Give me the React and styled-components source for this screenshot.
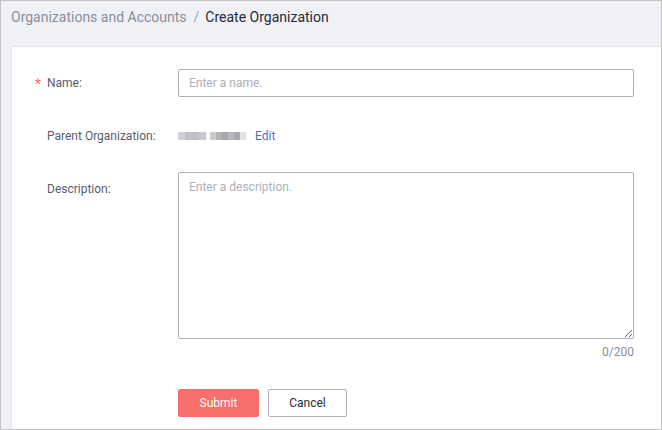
import styled, { createGlobalStyle } from "styled-components";

const GlobalStyle = createGlobalStyle`
  html, body {
    margin: 0;
    padding: 0;
    width: 662px;
    height: 430px;
    overflow: hidden;
    font-family: Roboto, "Liberation Sans", sans-serif;
  }
  * { box-sizing: border-box; }
`;

const Frame = styled.div`
  width: 662px;
  height: 430px;
  border: 1px solid #c4c4c4;
  background: #f0f1f6;
  display: flex;
  flex-direction: column;
`;

const Breadcrumb = styled.div`
  height: 45px;
  flex-shrink: 0;
  padding: 8px 0 0 10px;
  display: flex;
  align-items: flex-start;
  font-size: 14px;
  line-height: 16px;
`;

const Crumb = styled.span`
  color: ${(p) => (p.$current ? "#252b3a" : "#8a8e99")};
`;

const Slash = styled.span`
  color: #a0a3ab;
  margin: 0 6px 0 7px;
`;

const Card = styled.div`
  flex: 1;
  margin-left: 10px;
  background: #fff;
  border-top: 1px solid #e3e4e8;
  border-left: 1px solid #e8e9ec;
  padding: 22px 27px 0 22px;
  display: flex;
  flex-direction: column;
`;

const Row = styled.div`
  display: flex;
  align-items: ${(p) => (p.$top ? "flex-start" : "center")};
  margin-bottom: ${(p) => p.$gap || 0}px;
`;

const Label = styled.label`
  width: 144px;
  flex-shrink: 0;
  font-size: 12px;
  color: #575d6c;
  display: flex;
  align-items: center;
  padding-top: ${(p) => (p.$top ? "10px" : "0")};
`;

const Star = styled.span`
  color: #f66f6a;
  width: 13px;
  padding-left: 1px;
  font-size: 14px;
  line-height: 1;
  margin-top: 2px;
`;

const LabelText = styled.span`
  margin-left: 13px;
`;

const Input = styled.input`
  flex: 1;
  height: 28px;
  border: 1px solid #adb0b8;
  border-radius: 2px;
  padding: 0 10px;
  font-family: inherit;
  font-size: 12px;
  color: #252b3a;
  outline: none;
  &::placeholder { color: #adb0b8; }
`;

const Field = styled.div`
  flex: 1;
  display: flex;
  flex-direction: column;
`;

const TextArea = styled.textarea`
  height: 167px;
  border: 1px solid #adb0b8;
  border-radius: 2px;
  padding: 7px 10px;
  font-family: inherit;
  font-size: 12px;
  color: #252b3a;
  resize: vertical;
  outline: none;
  &::placeholder { color: #adb0b8; }
`;

const Counter = styled.div`
  text-align: right;
  font-size: 12px;
  color: #8a8e99;
  margin-top: 6px;
`;

const Blurred = styled.span`
  display: inline-flex;
  gap: 4px;
  margin-right: 9px;
`;

const Mosaic = styled.span`
  display: inline-flex;
  height: 8px;
  span {
    width: ${(p) => p.$cell}px;
    height: 8px;
  }
`;

const EditLink = styled.a`
  color: #526ecc;
  font-size: 12px;
  cursor: pointer;
`;

const Value = styled.div`
  display: flex;
  align-items: center;
`;

const Button = styled.button`
  height: 28px;
  padding: 0 16px;
  border-radius: 2px;
  font-family: inherit;
  font-size: 12px;
  cursor: pointer;
  border: 1px solid ${(p) => (p.$primary ? "#f66f6a" : "#adb0b8")};
  background: ${(p) => (p.$primary ? "#f66f6a" : "#fff")};
  color: ${(p) => (p.$primary ? "#fff" : "#252b3a")};
  margin-right: 9px;
  width: ${(p) => (p.$primary ? "81px" : "79px")};
`;

const Buttons = styled.div`
  display: flex;
  padding-left: 144px;
`;

const mosaicA = ["#cfcfd6", "#c2c1cb", "#bebdc8", "#c8c8d0"];
const mosaicB = ["#c9c9cf", "#bcb3a8", "#a5a7ae", "#b3b8c8", "#aaa9ae", "#e4e4e8"];

function App() {
  return (
    <>
      <GlobalStyle />
      <Frame>
        <Breadcrumb>
          <Crumb>Organizations and Accounts</Crumb>
          <Slash>/</Slash>
          <Crumb $current>Create Organization</Crumb>
        </Breadcrumb>
        <Card>
          <Row $gap={32}>
            <Label>
              <Star>*</Star>
              <span>Name:</span>
            </Label>
            <Input placeholder="Enter a name." />
          </Row>
          <Row $gap={29}>
            <Label>
              <LabelText>Parent Organization:</LabelText>
            </Label>
            <Value>
              <Blurred>
                <Mosaic $cell={7}>
                  {mosaicA.map((c, i) => (
                    <span key={i} style={{ background: c }} />
                  ))}
                </Mosaic>
                <Mosaic $cell={6}>
                  {mosaicB.map((c, i) => (
                    <span key={i} style={{ background: c }} />
                  ))}
                </Mosaic>
              </Blurred>
              <EditLink>Edit</EditLink>
            </Value>
          </Row>
          <Row $top $gap={30}>
            <Label $top>
              <LabelText>Description:</LabelText>
            </Label>
            <Field>
              <TextArea placeholder="Enter a description." />
              <Counter>0/200</Counter>
            </Field>
          </Row>
          <Buttons>
            <Button $primary>Submit</Button>
            <Button>Cancel</Button>
          </Buttons>
        </Card>
      </Frame>
    </>
  );
}

export default App;
